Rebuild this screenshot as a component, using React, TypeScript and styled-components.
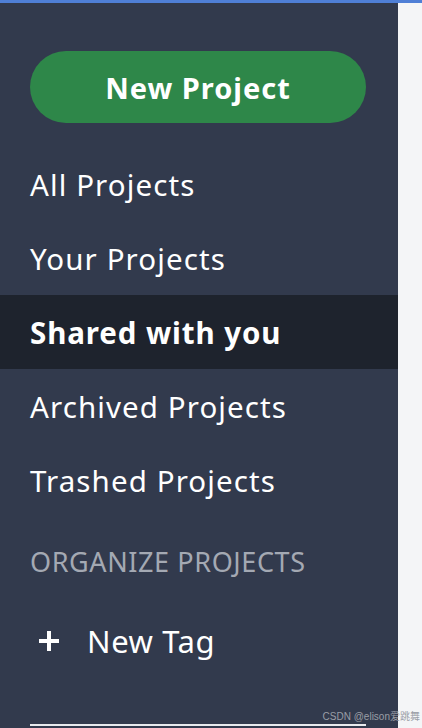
import React from 'react'
import styled, { createGlobalStyle } from 'styled-components'

const GlobalStyle = createGlobalStyle`
  html, body {
    margin: 0;
    padding: 0;
    background: #f4f5f7;
    font-family: "Noto Sans", "Open Sans", sans-serif;
    overflow: hidden;
  }
`

const Page = styled.div`
  width: 422px;
  height: 728px;
  display: flex;
  flex-direction: column;
  position: relative;
  overflow: hidden;
`
const TopBar = styled.div`
  height: 3px;
  background: #4f7fd6;
  flex-shrink: 0;
`
const Body = styled.div`
  flex: 1;
  display: flex;
`
const Sidebar = styled.nav`
  width: 398px;
  background: #323a4d;
  display: flex;
  flex-direction: column;
  padding-top: 48px;
`
const Main = styled.main`
  flex: 1;
  background: #f4f5f7;
`
const NewButton = styled.button`
  margin: 0 32px 24px 30px;
  height: 72px;
  border: none;
  border-radius: 36px;
  background: #2e8749;
  color: #fff;
  font-family: "Noto Sans", "Open Sans", sans-serif;
  font-weight: 700;
  font-size: 29px;
  letter-spacing: 1px;
  cursor: pointer;
`
const NavList = styled.ul`
  list-style: none;
  margin: 0;
  padding: 0;
`
const NavItem = styled.li<{ $active?: boolean }>`
  height: 74px;
  display: flex;
  align-items: center;
  padding-left: 30px;
  color: #fff;
  font-size: 29.5px;
  letter-spacing: ${p => (p.$active ? '0.9px' : '1.1px')};
  font-weight: ${p => (p.$active ? 700 : 400)};
  background: ${p => (p.$active ? '#1e232d' : 'transparent')};
`
const SectionTitle = styled.div`
  margin-top: 26px;
  padding-left: 30px;
  color: #a4a9b3;
  font-size: 27px;
  letter-spacing: 0.6px;
  text-transform: uppercase;
`
const TagButton = styled.div`
  margin-top: 40px;
  padding-left: 38px;
  display: flex;
  align-items: center;
  gap: 27px;
  color: #fff;
  font-size: 31px;
  letter-spacing: 0.6px;
`
const Divider = styled.div`
  margin: auto 32px 2px 30px;
  height: 2px;
  background: #e8eaee;
`
const Watermark = styled.span`
  position: absolute;
  right: 2px;
  bottom: 5px;
  font-family: "Liberation Sans", "Noto Sans CJK SC", sans-serif;
  font-size: 10px;
  color: #9a9ea6;
`

const items = ['All Projects', 'Your Projects', 'Shared with you', 'Archived Projects', 'Trashed Projects']

const PlusIcon = () => (
  <svg width="22" height="22" viewBox="0 0 22 22">
    <path d="M11 1v20M1 11h20" stroke="#fff" strokeWidth="4" />
  </svg>
)

const App: React.FC = () => (
  <Page>
    <GlobalStyle />
    <TopBar />
    <Body>
      <Sidebar>
        <NewButton>New Project</NewButton>
        <NavList>
          {items.map(item => (
            <NavItem key={item} $active={item === 'Shared with you'}>
              {item}
            </NavItem>
          ))}
        </NavList>
        <SectionTitle>Organize Projects</SectionTitle>
        <TagButton>
          <PlusIcon />
          New Tag
        </TagButton>
        <Divider />
      </Sidebar>
      <Main />
    </Body>
    <Watermark>CSDN @elison爱跳舞</Watermark>
  </Page>
)

export default App
